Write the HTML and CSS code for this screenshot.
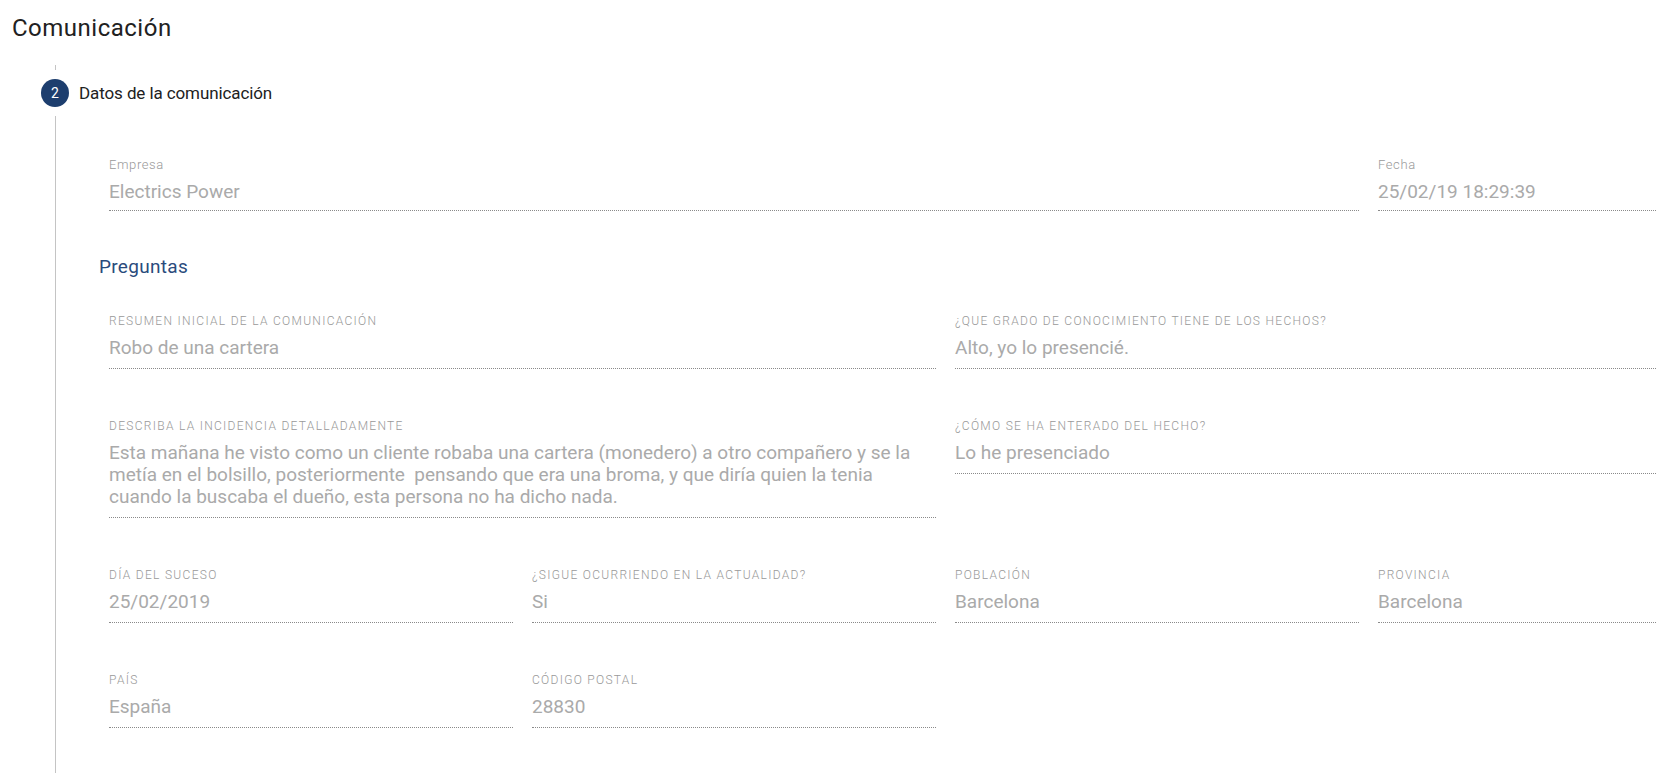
FILE: index.html
```html
<!DOCTYPE html>
<html>
<head>
    <title>Comunicación</title>
    <link rel="stylesheet" href="styles.css">
</head>
<body>
    <h1 class="page-title">Comunicación</h1>

    <div class="step">
        <div class="step-tick"></div>
        <div class="step-head">
            <span class="step-num">2</span>
            <span class="step-title">Datos de la comunicación</span>
        </div>

        <div class="step-body">
            <div class="fields">
                <div class="field top-field span-3">
                    <div class="field-label plain">Empresa</div>
                    <div class="field-value">Electrics Power</div>
                </div>
                <div class="field top-field">
                    <div class="field-label plain">Fecha</div>
                    <div class="field-value">25/02/19 18:29:39</div>
                </div>
            </div>

            <h2 class="section-title">Preguntas</h2>

            <div class="fields questions">
                <div class="field span-2">
                    <div class="field-label">Resumen inicial de la comunicación</div>
                    <div class="field-value">Robo de una cartera</div>
                </div>
                <div class="field span-2">
                    <div class="field-label">¿Que grado de conocimiento tiene de los hechos?</div>
                    <div class="field-value">Alto, yo lo presencié.</div>
                </div>

                <div class="field span-2">
                    <div class="field-label">Describa la incidencia detalladamente</div>
                    <div class="field-value">Esta mañana he visto como un cliente robaba una cartera (monedero) a otro compañero y se la metía en el bolsillo, posteriormente &nbsp;pensando que era una broma, y que diría quien la tenia cuando la buscaba el dueño, esta persona no ha dicho nada.</div>
                </div>
                <div class="field span-2">
                    <div class="field-label">¿Cómo se ha enterado del hecho?</div>
                    <div class="field-value">Lo he presenciado</div>
                </div>

                <div class="field">
                    <div class="field-label">Día del suceso</div>
                    <div class="field-value">25/02/2019</div>
                </div>
                <div class="field">
                    <div class="field-label">¿Sigue ocurriendo en la actualidad?</div>
                    <div class="field-value">Si</div>
                </div>
                <div class="field">
                    <div class="field-label">Población</div>
                    <div class="field-value">Barcelona</div>
                </div>
                <div class="field">
                    <div class="field-label">Provincia</div>
                    <div class="field-value">Barcelona</div>
                </div>

                <div class="field">
                    <div class="field-label">País</div>
                    <div class="field-value">España</div>
                </div>
                <div class="field">
                    <div class="field-label">Código postal</div>
                    <div class="field-value">28830</div>
                </div>
            </div>
        </div>
    </div>
</body>
</html>
```

FILE: styles.css
```css
html, body {
    overflow: hidden;
}
body {
    font-family: Roboto, "Liberation Sans", Arial, sans-serif;
    margin: 0;
    padding: 0;
    color: #212121;
    background: #fff;
}
.page-title {
    font-size: 24px;
    font-weight: 400;
    letter-spacing: 0.5px;
    line-height: 28px;
    margin: 14px 0 0 12px;
}
.step {
    margin-left: 41px;
}
.step-tick {
    width: 14px;
    height: 5px;
    margin-top: 23px;
    margin-bottom: 9px;
    border-right: 1px solid #c4c4c4;
}
.step-head {
    display: flex;
    align-items: center;
    height: 28px;
}
.step-num {
    width: 28px;
    height: 28px;
    border-radius: 50%;
    background-color: #1d3e6e;
    color: #fff;
    font-size: 14px;
    display: flex;
    align-items: center;
    justify-content: center;
}
.step-title {
    margin-left: 10px;
    font-size: 17px;
    letter-spacing: -0.1px;
}
.step-body {
    margin: 9px 0 0 14px;
    border-left: 1px solid #c4c4c4;
    padding: 42px 0 60px 43px;
}
.fields {
    display: grid;
    grid-template-columns: repeat(4, 404px);
    column-gap: 19px;
    row-gap: 50px;
    margin-left: 10px;
}
.field {
    border-bottom: 1px dotted #8a8a8a;
    padding-bottom: 9px;
    align-self: start;
}
.top-field {
    padding-bottom: 7px;
}
.span-2 {
    grid-column: span 2;
}
.span-3 {
    grid-column: span 3;
}
.field-label {
    font-size: 12px;
    font-weight: 300;
    letter-spacing: 1.3px;
    line-height: 14px;
    color: #999;
    text-transform: uppercase;
    margin-bottom: 9px;
}
.field-label.plain {
    font-size: 13px;
    letter-spacing: 0.6px;
    text-transform: none;
}
.field-value {
    font-size: 19px;
    font-weight: 400;
    line-height: 22px;
    color: #aaa;
}
.section-title {
    font-size: 19px;
    font-weight: 400;
    letter-spacing: 0.3px;
    line-height: 24px;
    color: #2a4b7c;
    margin: 44px 0 35px 0;
}
```
